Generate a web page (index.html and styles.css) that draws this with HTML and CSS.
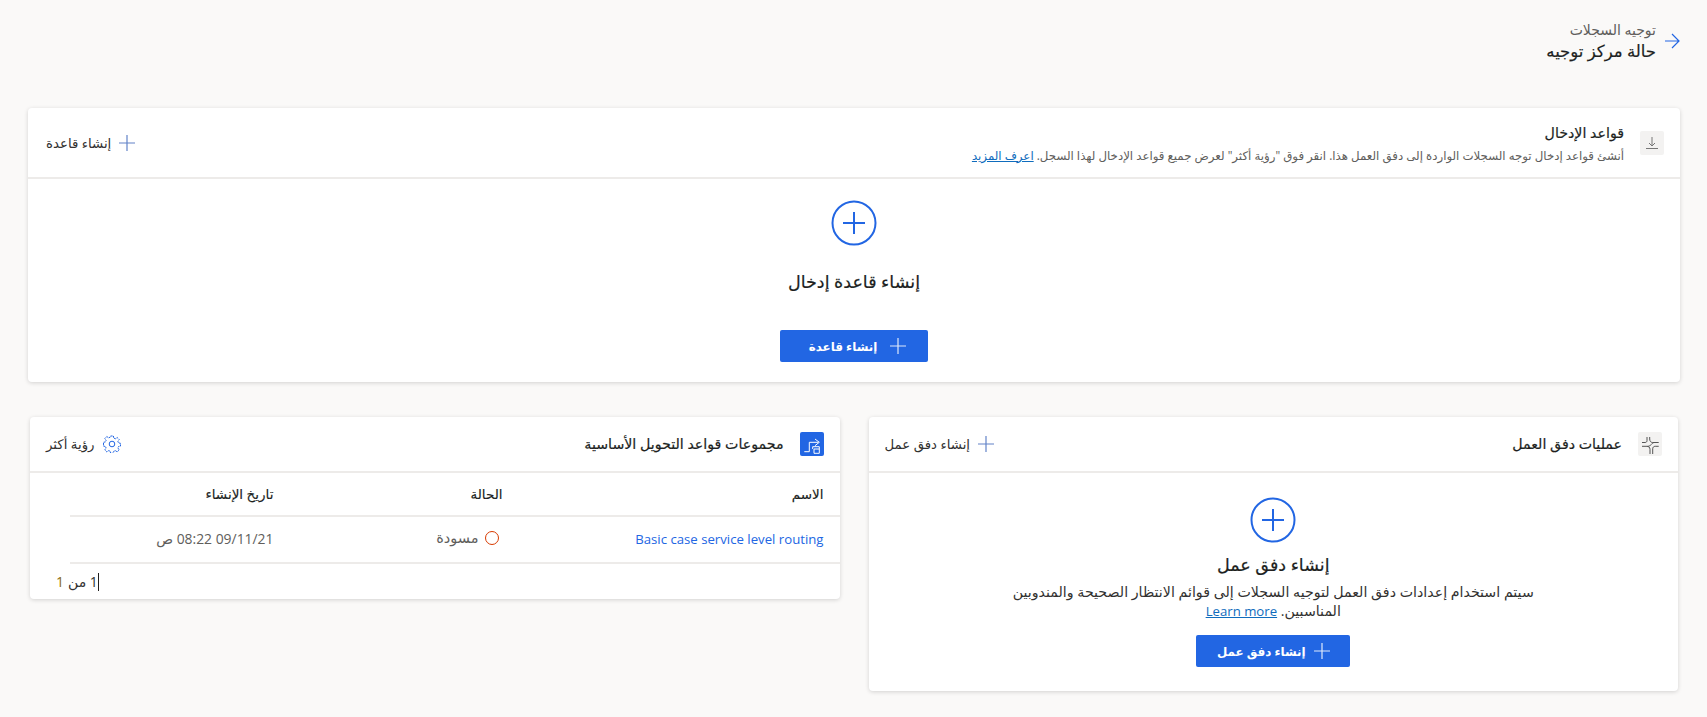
FILE: index.html
```html
<!DOCTYPE html>
<html lang="ar" dir="rtl">
<head>
    <meta charset="UTF-8">
    <meta name="viewport" content="width=device-width, initial-scale=1.0">
    <title>حالة مركز توجيه</title>
    <link rel="stylesheet" href="styles.css">
</head>
<body>
    <header class="page-head">
        <svg class="back-arrow" width="16" height="16" viewBox="0 0 16 16">
            <path d="M1 8h14M8 1l7 7-7 7" fill="none" stroke="#2266e3" stroke-width="1.200"/>
        </svg>
        <div>
            <div class="page-sub">توجيه السجلات</div>
            <h1 class="page-title">حالة مركز توجيه</h1>
        </div>
    </header>

    <section class="card card-top">
        <div class="card-head head-tall">
            <span class="icon-box">
                <svg width="12" height="12" viewBox="0 0 12 12">
                    <path d="M6 0v9M3 6l3 3 3-3M0 11.500h12" fill="none" stroke="#777" stroke-width="1"/>
                </svg>
            </span>
            <div class="head-text">
                <h2 class="card-title">قواعد الإدخال</h2>
                <p class="card-desc">أنشئ قواعد إدخال توجه السجلات الواردة إلى دفق العمل هذا. انقر فوق "رؤية أكثر" لعرض جميع قواعد الإدخال لهذا السجل. <a href="#">اعرف المزيد</a></p>
            </div>
            <a class="head-action" href="#">
                <svg width="16" height="16" viewBox="0 0 16 16"><path d="M8 0v16M0 8h16" stroke="#1f4fb0" stroke-opacity=".7" stroke-width="1.200"/></svg>
                إنشاء قاعدة
            </a>
        </div>
        <div class="empty empty-top">
            <svg width="46" height="46" viewBox="0 0 46 46">
                <circle cx="23" cy="23" r="21.500" fill="none" stroke="#2266e3" stroke-width="2"/>
                <path d="M23 12v22M12 23h22" stroke="#2266e3" stroke-width="2"/>
            </svg>
            <h3 class="empty-title title-top">إنشاء قاعدة إدخال</h3>
            <button class="btn btn-rule">
                <svg width="16" height="16" viewBox="0 0 16 16"><path d="M8 0v16M0 8h16" stroke="#fff" stroke-opacity=".85" stroke-width="1.200"/></svg>
                إنشاء قاعدة
            </button>
        </div>
    </section>

    <div class="card-row">
        <section class="card card-flow">
            <div class="card-head">
                <span class="icon-box">
                    <svg width="20" height="20" viewBox="0 0 20 20">
                        <path d="M7 3v3.500c0 1.300-.7 2-2 2H2M9.700 3v2c0 2 1 3.500 3 3.500h6M2 12.300h5c1.500 0 3 1 3 3V20M18.700 12.300h-3.500c-1.500 0-2.500 1-2.500 2.500V20M7.500 12.300c2 0 3-1 4-2 .7-.7 1.500-1.800 3-1.800" fill="none" stroke="#555" stroke-width="1"/>
                    </svg>
                </span>
                <h2 class="card-title">عمليات دفق العمل</h2>
                <a class="head-action" href="#">
                    <svg width="16" height="16" viewBox="0 0 16 16"><path d="M8 0v16M0 8h16" stroke="#1f4fb0" stroke-opacity=".7" stroke-width="1.200"/></svg>
                    إنشاء دفق عمل
                </a>
            </div>
            <div class="empty empty-flow">
                <svg width="46" height="46" viewBox="0 0 46 46">
                    <circle cx="23" cy="23" r="21.500" fill="none" stroke="#2266e3" stroke-width="2"/>
                    <path d="M23 12v22M12 23h22" stroke="#2266e3" stroke-width="2"/>
                </svg>
                <h3 class="empty-title">إنشاء دفق عمل</h3>
                <p class="empty-desc"><span>سيتم استخدام إعدادات دفق العمل لتوجيه السجلات إلى قوائم الانتظار الصحيحة والمندوبين</span> <span>المناسبين.</span> <a href="#">Learn more</a></p>
                <button class="btn btn-flow">
                    <svg width="16" height="16" viewBox="0 0 16 16"><path d="M8 0v16M0 8h16" stroke="#fff" stroke-opacity=".85" stroke-width="1.200"/></svg>
                    إنشاء دفق عمل
                </button>
            </div>
        </section>

        <section class="card card-rules">
            <div class="card-head">
                <span class="icon-box icon-blue">
                    <svg width="20" height="20" viewBox="0 0 20 20">
                        <path d="M2.300 17.700h5V8.300h9M13 5l4.300 3.300L13 11.700" fill="none" stroke="#fff" stroke-width="1"/>
                        <path d="M10.700 15v-2.300h6.600V15M12 15h5.300v4.300H12z" fill="none" stroke="#fff" stroke-width="1"/>
                    </svg>
                </span>
                <h2 class="card-title title-rules">مجموعات قواعد التحويل الأساسية</h2>
                <a class="head-action" href="#">
                    <svg width="18" height="18" viewBox="0 0 18 18">
                        <circle cx="9" cy="9" r="2.800" fill="none" stroke="#2266e3" stroke-width="1"/>
                        <path d="M7.600 1h2.800l.4 2.200 1.500.6 1.900-1.300 2 2-1.300 1.900.6 1.500 2 .4v2.800l-2 .4-.6 1.500 1.300 1.900-2 2-1.900-1.300-1.500.6-.4 2H7.600l-.4-2-1.500-.6-1.900 1.300-2-2 1.300-1.900-.6-1.500-2-.4V7.300l2-.4.6-1.500L1.800 3.500l2-2 1.900 1.300 1.500-.6z" fill="none" stroke="#2266e3" stroke-width="1" stroke-dasharray="2 .7"/>
                    </svg>
                    رؤية أكثر
                </a>
            </div>
            <table class="rules-table">
                <thead>
                    <tr>
                        <th class="col-name">الاسم</th>
                        <th class="col-state">الحالة</th>
                        <th class="col-date">تاريخ الإنشاء</th>
                    </tr>
                </thead>
                <tbody>
                    <tr>
                        <td><a href="#">Basic case service level routing</a></td>
                        <td><span class="status"><i class="status-dot"></i>مسودة</span></td>
                        <td class="date-cell">09/11/21 08:22 ص</td>
                    </tr>
                </tbody>
            </table>
            <div class="pager"><span class="caret"></span>1 من <span class="pager-total">1</span></div>
        </section>
    </div>
</body>
</html>
```

FILE: styles.css
```css
* {
    box-sizing: border-box;
}
body {
    margin: 0;
    padding: 20px 27px 0 28px;
    height: 717px;
    overflow: hidden;
    font-family: "Open Sans", "Noto Sans", "DejaVu Sans", sans-serif;
    font-size: 14px;
    color: #323130;
    background-color: #faf9f8;
}
a {
    color: #0f6cbd;
}
h1, h2, h3, p {
    margin: 0;
    font-weight: normal;
}
.page-head {
    display: flex;
    align-items: center;
    gap: 8px;
    height: 42px;
}
.page-sub {
    font-size: 14px;
    line-height: 20px;
    color: #605e5c;
}
.page-title {
    font-size: 16.500px;
    line-height: 22px;
    color: #201f1e;
    -webkit-text-stroke: 0.2px;
}
.card {
    background: #fff;
    border-radius: 4px;
    box-shadow: 0 1px 4px rgba(0, 0, 0, 0.16);
}
.card-top {
    margin-top: 46px;
}
.card-head {
    display: flex;
    align-items: center;
    height: 56px;
    padding: 0 16px;
    border-bottom: 2px solid #edebe9;
}
.head-tall {
    height: 71px;
    padding-top: 1px;
}
.icon-box {
    display: flex;
    align-items: center;
    justify-content: center;
    flex: none;
    width: 24px;
    height: 24px;
    margin-left: 16px;
    border-radius: 2px;
    background: #f3f2f1;
}
.icon-blue {
    background: #2266e3;
}
.head-text {
    flex: 1;
    padding-top: 1px;
}
.card-title {
    flex: 1;
    font-size: 14.200px;
    line-height: 20px;
    color: #201f1e;
    -webkit-text-stroke: 0.2px;
}
.card-desc {
    margin-top: 2px;
    font-size: 11.800px;
    line-height: 20px;
    color: #605e5c;
}
.head-action {
    display: flex;
    align-items: center;
    gap: 8px;
    font-size: 13.300px;
    color: #323130;
    text-decoration: none;
}
.head-tall .head-action {
    margin-left: 2px;
}
.empty {
    display: flex;
    flex-direction: column;
    align-items: center;
    text-align: center;
}
.empty-top {
    height: 203px;
    padding-top: 21px;
}
.empty-flow {
    height: 218px;
    padding-top: 24px;
}
.empty-title {
    margin-top: 9px;
    font-size: 17.500px;
    line-height: 24px;
    color: #201f1e;
    -webkit-text-stroke: 0.2px;
}
.title-top {
    margin-top: 23px;
}
.empty-desc {
    width: 530px;
    margin-top: 6px;
    font-size: 14.200px;
    line-height: 19px;
    color: #323130;
}
.empty-desc a {
    font-size: 13.200px;
}
.btn {
    display: flex;
    align-items: center;
    justify-content: center;
    height: 32px;
    border: none;
    border-radius: 2px;
    background: #2266e3;
    color: #fff;
    font-family: inherit;
    font-size: 11.900px;
    font-weight: 600;
}
.btn-rule {
    gap: 13px;
    width: 148px;
    margin-top: 37px;
    padding: 0 0 0 7px;
}
.btn-flow {
    gap: 8px;
    width: 154px;
    margin-top: 14px;
}
.card-row {
    display: flex;
    align-items: flex-start;
    gap: 29px;
    margin-top: 35px;
    padding: 0 2px;
}
.card-flow, .card-rules {
    flex: 1;
}
.rules-table {
    width: calc(100% - 40px);
    margin-left: 40px;
    border-collapse: collapse;
}
.rules-table th, .rules-table td {
    padding: 0 16px;
    text-align: right;
}
.rules-table th {
    height: 43px;
    font-size: 13.500px;
    font-weight: normal;
    color: #201f1e;
    -webkit-text-stroke: 0.15px;
    border-bottom: 2px solid #edebe9;
}
.rules-table td {
    height: 47px;
    padding-bottom: 2px;
    font-size: 13.200px;
    color: #605e5c;
    border-bottom: 2px solid #edebe9;
}
.rules-table a {
    color: #2266e3;
    text-decoration: none;
}
.col-name {
    width: 321px;
}
.col-state {
    width: 229px;
}
.rules-table .date-cell {
    font-size: 13.900px;
}
.status {
    display: inline-flex;
    align-items: center;
    gap: 6px;
    margin-right: 4px;
    font-size: 14.500px;
}
.status-dot {
    width: 14px;
    height: 14px;
    border: 1px solid #d83b01;
    border-radius: 50%;
}
.pager {
    height: 35px;
    padding-left: 26px;
    display: flex;
    align-items: center;
    justify-content: flex-end;
    gap: 4px;
    font-size: 14px;
}
.pager-total {
    color: #8a6a14;
}
.caret {
    width: 1px;
    height: 18px;
    margin-left: -4px;
    background: #201f1e;
}
```
